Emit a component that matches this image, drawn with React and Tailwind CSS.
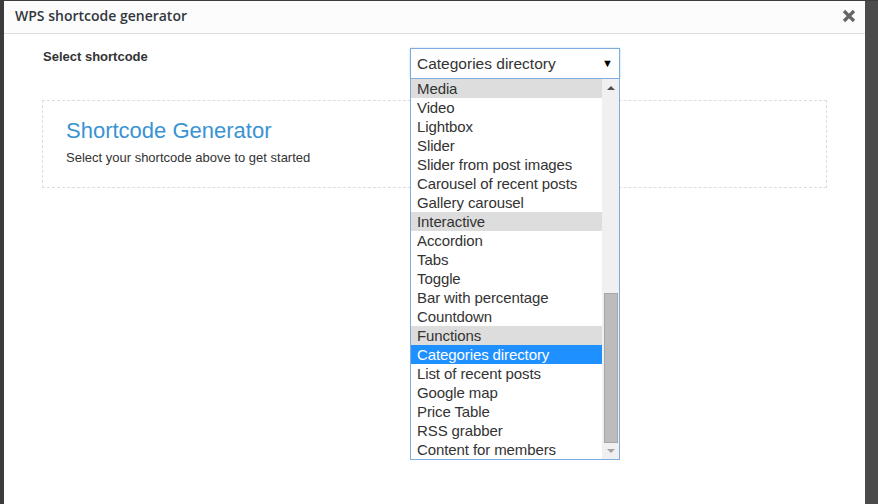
import React from "react";

const items = [
  { t: "Media", g: true },
  { t: "Video" },
  { t: "Lightbox" },
  { t: "Slider" },
  { t: "Slider from post images" },
  { t: "Carousel of recent posts" },
  { t: "Gallery carousel" },
  { t: "Interactive", g: true },
  { t: "Accordion" },
  { t: "Tabs" },
  { t: "Toggle" },
  { t: "Bar with percentage" },
  { t: "Countdown" },
  { t: "Functions", g: true },
  { t: "Categories directory", s: true },
  { t: "List of recent posts" },
  { t: "Google map" },
  { t: "Price Table" },
  { t: "RSS grabber" },
  { t: "Content for members" },
];

export default function App() {
  return (
    <div className="w-[878px] h-[504px] overflow-hidden flex bg-[#3d3d3d] pt-px">
      <div className="w-[4px] shrink-0 bg-[#3b3b3b]" />
      <div className="w-[861px] shrink-0 h-[503px] bg-white flex flex-col">
        <div className="h-[33px] shrink-0 bg-[#fcfcfc] border-b border-[#dddddd] flex items-center justify-between pl-[11px] pr-[9px]">
          <span className="text-[14px] font-semibold text-[#32373c] font-['Open_Sans',sans-serif] leading-none -mt-[2px]">
            WPS shortcode generator
          </span>
          <svg width="14" height="14" viewBox="0 0 14 14" className="-mt-[3px]">
            <path d="M2 2 L12 12 M12 2 L2 12" stroke="#666" strokeWidth="3.2" strokeLinecap="butt" />
          </svg>
        </div>
        <div className="relative pl-[39px] pr-[38px] pt-[14px] font-['Liberation_Sans',Arial,sans-serif]">
          <div className="flex items-start">
            <div className="w-[367px] text-[13px] font-bold text-[#333] leading-none pt-[2px]">
              Select shortcode
            </div>
            <div className="relative w-[210px] h-[31px] border border-[#7eacde] bg-white flex items-center justify-between pl-[6px] pr-[6px] shadow-[0_0_2px_rgba(30,140,190,0.35)]">
              <span className="text-[15.5px] text-[#333] leading-none">Categories directory</span>
              <span className="text-[11px] text-black leading-none">▼</span>
              <div className="absolute left-[-1px] top-[30px] w-[210px] h-[381px] border border-[#7eacde] border-t-0 bg-white flex z-10">
                <div className="flex-1 flex flex-col">
                  {items.map((it) => (
                    <div
                      key={it.t}
                      className={
                        "h-[19px] shrink-0 pl-[6px] text-[15px] leading-[19px] whitespace-nowrap tracking-[-0.1px] " +
                        (it.s
                          ? "bg-[#1e90ff] text-white"
                          : it.g
                          ? "bg-[#dddddd] text-[#333]"
                          : "text-[#333]")
                      }
                    >
                      {it.t}
                    </div>
                  ))}
                </div>
                <div className="w-[17px] shrink-0 bg-[#f0f0f0] flex flex-col items-center">
                  <div className="h-[16px] flex items-center justify-center">
                    <svg width="8" height="5" viewBox="0 0 8 5"><path d="M0 5 L4 1 L8 5 Z" fill="#505050" /></svg>
                  </div>
                  <div className="h-[198px]" />
                  <div className="w-[14px] h-[150px] bg-[#bcbcbc] border border-[#a6a6a6]" />
                  <div className="h-[16px] flex items-center justify-center">
                    <svg width="8" height="5" viewBox="0 0 8 5"><path d="M0 0 L8 0 L4 4 Z" fill="#a3a3a3" /></svg>
                  </div>
                </div>
              </div>
            </div>
          </div>
          <div className="mt-[21px] ml-[-1px] h-[88px] border border-dashed border-[#dddddd] pl-[23px] pt-[19px]">
            <div className="text-[22px] text-[#3a93d2] leading-none">Shortcode Generator</div>
            <div className="text-[13px] text-[#333] leading-none mt-[9px]">Select your shortcode above to get started</div>
          </div>
        </div>
      </div>
      <div className="flex-1 bg-[#4b4b4b]" />
    </div>
  );
}
